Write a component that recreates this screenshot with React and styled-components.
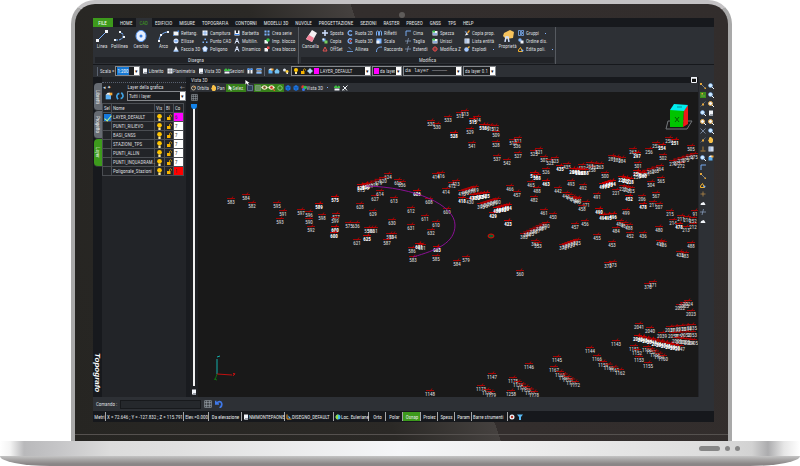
import React from 'react';
import styled, { createGlobalStyle, css } from 'styled-components';

const GlobalStyle = createGlobalStyle`
  * {
    box-sizing: border-box;
  }

  body {
    margin: 0;
    background: #fff;
    overflow: hidden;
  }

  body, button, input, select, table {
    font-family: 'Roboto Condensed', Lato, 'Liberation Sans', sans-serif;
    font-size: 5px;
    line-height: 6px;
    color: #d8dade;
  }

  button, input, select {
    margin: 0;
    padding: 0;
    border: 0;
    border-radius: 0;
    background: none;
    appearance: none;
    outline: none;
  }

  svg {
    display: block;
    flex: none;
  }
`;

/* ---------- Laptop ---------- */
const Page = styled.div`
  display: flex;
  flex-direction: column;
  height: 100vh;
`;

const Lid = styled.div`
  flex: 1;
  min-height: 0;
  display: flex;
  flex-direction: column;
  margin: 0 68px 0 71px;
  border: 4px solid #a9a9a9;
  border-top-color: #c4c2c4;
  border-bottom: 0;
  border-radius: 24px 24px 0 0;
  background: linear-gradient(71deg, #262522 0%, #2b2926 40%, #45413f 53%, #332e2d 53%, #322d2c 100%);
`;

const CameraBar = styled.div`
  display: flex;
  justify-content: center;
  align-items: flex-end;
  height: 14px;
`;

const Camera = styled.div`
  width: 6px;
  height: 6px;
  border-radius: 50%;
  background: #5f5c5a;
`;

const Chin = styled.div`
  height: 19px;
  padding-top: 12px;

  &::before {
    content: '';
    display: block;
    height: 1px;
    background: #55514f;
  }
`;

const Base = styled.div`
  display: flex;
  justify-content: flex-end;
  align-items: center;
  gap: 5px;
  height: 15px;
  padding-right: 60px;
  background: linear-gradient(90deg, #fff 0, #f4f4f4 10px, #b9b9bb 24px, #c6c6c8 60px, #dcdcdc 110px,
    #e0e0e0 22%, #f5f6f8 50%, #ededed 66%, #dedede 88%, #d2d2d2 94%, #acacae 96%, #e6e6e6 98%, #fff 100%);
`;

const Port = styled.div`
  width: ${(p) => p.$w}px;
  height: 5px;
  border-radius: 3px;
  background: #868686;
`;

const Underside = styled.div`
  height: 10px;
  border-radius: 0 0 50px 50px / 0 0 10px 10px;
  background: linear-gradient(#c4c4c4, #a5a3a3 40%, #8a8586 80%);
`;

/* ---------- Application window ---------- */
const Screen = styled.div`
  flex: 1;
  min-height: 0;
  display: flex;
  flex-direction: column;
  margin: 0 14px 0 18px;
  background: #2d3035;
  white-space: nowrap;
`;

const TabBar = styled.nav`
  display: flex;
  height: 9px;
  background: #17191d;
`;

const Tab = styled.button`
  height: 9px;
  padding: 0 4px 0 3px;
  color: ${(p) => (p.$active ? '#3f9a22' : '#e4e6e8')};
  background: ${(p) => (p.$active ? '#2d3035' : 'none')};

  ${(p) => p.$file && css`
    width: 20px;
    margin-right: 4px;
    color: #fff;
    background: #3d9a1c;
  `}
`;

const Ribbon = styled.div`
  display: flex;
  height: 38px;
  border-bottom: 1px solid #16181c;
`;

const Group = styled.section`
  display: flex;
  flex-direction: column;
  width: ${(p) => p.$w}px;
  border-right: 1px solid #565a60;
`;

const GroupBody = styled.div`
  display: grid;
  grid-template-columns: ${(p) => p.$cols};
  height: 30px;
  padding-top: 3px;
`;

const GroupCaption = styled.div`
  height: 6px;
  margin: 0 1px 0 2px;
  text-align: center;
  background: #212327;
`;

const BigButton = styled.button`
  display: flex;
  flex-direction: column;
  align-items: center;
  height: 19px;
  gap: 1px;
`;

const SmallColumn = styled.div`
  display: flex;
  flex-direction: column;
  gap: 2px;
`;

const SmallButton = styled.button`
  display: flex;
  align-items: center;
  gap: 2px;
  height: 6px;
`;

const MenuDot = styled.span`
  width: 1px;
  height: 1px;
  margin: 1px 4px;
  background: #7fb0ff;
`;

const Toolbar = styled.div`
  display: flex;
  align-items: center;
  gap: 1px;
  height: 12px;
  padding-left: 4px;
`;

const ToolButton = styled.button`
  display: flex;
  align-items: center;
  height: ${(p) => p.$h || 9}px;
  padding: 0 1px;
  background: ${(p) => (p.$on ? '#37801a' : 'none')};
`;

const Grip = styled.div`
  width: 1px;
  height: 9px;
  margin-right: 1px;
  background: #5b6370;
`;

const Combo = styled.div`
  display: flex;
  align-items: center;
  gap: 1px;
  width: ${(p) => p.$w};
  height: 10px;
  padding-left: 1px;
  border: 1px solid #85888c;
  background: #1d1f22;

  &::after {
    content: '▾';
    width: 5px;
    height: 8px;
    flex: none;
    line-height: 8px;
    text-align: center;
    color: #111;
    background: #fff;
  }
`;

const ComboSelect = styled.select`
  flex: 1;
  min-width: 0;
  height: 8px;
  font-family: ${(p) => (p.$mono ? "'Liberation Mono', monospace" : 'inherit')};
`;

const ScaleInput = styled.input`
  flex: 1;
  min-width: 0;
  height: 8px;
  color: #fff;
  background: linear-gradient(90deg, #1677d2 12px, #1d1f22 12px);
`;

const Swatch = styled.span`
  flex: none;
  width: 5px;
  height: 6px;
  background: #f0f;
`;

/* ---------- Side panel ---------- */
const Workspace = styled.div`
  flex: 1;
  min-height: 0;
  display: grid;
  grid-template-columns: 9px 88px minmax(0, 1fr) 16px;
`;

const DockTabs = styled.div`
  display: flex;
  flex-direction: column;
  padding-top: 6px;
  background: #17191d;
`;

const DockTab = styled.button`
  height: 28px;
  margin-left: 1px;
  writing-mode: vertical-rl;
  border-radius: 4px 0 0 4px;
  border-bottom: 1px solid #2f3236;
  color: #f0f0f0;
  background: ${(p) => (p.$active ? '#3d9a1c' : '#666b72')};
`;

const Brand = styled.div`
  margin: auto 0 5px;
  writing-mode: vertical-rl;
  font-family: 'Liberation Sans', Arial, sans-serif;
  font-size: 8px;
  font-weight: bold;
  font-style: italic;
  line-height: 9px;
  color: #fff;
`;

const Panel = styled.aside`
  padding-top: 5px;
  border-right: 4px solid #191b1f;
  background: #222428;
`;

const PanelTitle = styled.div`
  display: flex;
  align-items: center;
  justify-content: space-between;
  height: 9px;
  padding: 0 1px;
  border-top: 1px dotted #596170;
`;

const PanelTools = styled.div`
  display: flex;
  align-items: center;
  gap: 3px;
  height: 10px;
  padding-left: 3px;
  margin-bottom: 2px;
`;

const LayerTable = styled.table`
  width: 81px;
  border-collapse: collapse;
  table-layout: fixed;

  th, td {
    height: 9px;
    padding: 0 1px;
    border: 1px solid #4a4d52;
    font-weight: normal;
    line-height: 6px;
    text-align: left;
  }
`;

const ColorCell = styled.td`
  color: #333;
  background: ${(p) => p.$c};
`;

const LayerCheck = styled.input`
  display: block;
  width: 7px;
  height: 7px;

  &:checked {
    background: #1679dc;
  }

  &:checked::after {
    content: '';
    display: block;
    width: 3px;
    height: 6px;
    margin-left: 2px;
    border: solid #bdf58a;
    border-width: 0 1px 1px 0;
    transform: rotate(40deg);
  }
`;

/* ---------- 3D view ---------- */
const View = styled.main`
  display: flex;
  flex-direction: column;
  min-width: 0;
  min-height: 0;
`;

const ViewTitle = styled.div`
  position: relative;
  display: flex;
  justify-content: space-between;
  height: 6px;
  padding: 0 1px;
  background: #17191d;
`;

const Pointer = styled.svg`
  position: absolute;
  left: 55px;
  top: 2px;
`;

const ViewTools = styled.div`
  display: flex;
  align-items: center;
  height: 9px;
`;

const ViewBody = styled.div`
  flex: 1;
  min-height: 0;
  display: flex;
  background: #191919;
`;

const SliderColumn = styled.div`
  display: flex;
  flex-direction: column;
  align-items: center;
  width: 8px;
  padding: 2px 0;
  gap: 3px;
  background: #1d1f22;
`;

const ZoomSlider = styled.input`
  flex: 1;
  min-height: 0;
  width: 6px;
  writing-mode: vertical-lr;

  &::-webkit-slider-runnable-track {
    width: 2px;
    margin: 0 auto;
    background: #f1f1f1;
  }

  &::-webkit-slider-thumb {
    appearance: none;
    width: 6px;
    height: 5px;
    margin-left: -2px;
    border-radius: 0 0 3px 3px;
    background: #1383ea;
  }
`;

const Canvas = styled.svg`
  flex: 1 1 0;
  min-width: 0;
  height: 100%;
`;

const RightTools = styled.div`
  display: grid;
  grid-template-columns: 8px 8px;
  grid-auto-rows: 9px;
  align-content: start;
  justify-items: center;
  align-items: center;
  padding-top: 4px;
  border-left: 1px solid #23252a;
`;

const IconButton = styled.button`
  grid-column: ${(p) => p.$col};
  grid-row: ${(p) => p.$row};
`;

/* ---------- Command and status ---------- */
const CommandBar = styled.div`
  display: flex;
  align-items: center;
  gap: 3px;
  height: 14px;
  padding-left: 3px;
`;

const CommandInput = styled.input`
  width: 81px;
  height: 9px;
  border: 1px solid #17191c;
  background: #25282c;
`;

const StatusBar = styled.footer`
  display: flex;
  align-items: center;
  height: 11px;
  background: #16181c;
`;

const StatusItem = styled.button`
  display: flex;
  align-items: center;
  justify-content: ${(p) => (p.$start ? 'flex-start' : 'center')};
  width: ${(p) => p.$w}px;
  height: 9px;
  padding-left: 1px;
  border-right: 1px solid #a4a6a8;
  color: #e4e6e8;
  background: ${(p) => (p.$on ? '#3d9a1c' : 'none')};
`;

/* ---------- Icons, drawn on a 12 x 12 grid ---------- */
const B = '#7db4ff';
const W = '#f2f5fa';
const G = '#35c24a';

const DRAWINGS = {
  line: <><path d="M2 10 10 2" stroke={B} /><path d="M0 9h3v3H0zM9 0h3v3H9z" fill={W} /></>,
  polyline: <><path d="M1 10h4l4-2V4L5 2" stroke={B} fill="none" strokeDasharray="3 1" /><path d="M0 9h2v2H0zM5 1h2v2H5zM9 6h2v2H9z" fill={W} /></>,
  circle: <><ellipse cx="6" cy="6" rx="5" ry="5.6" fill="#e6efff" stroke="#5b9bf5" /><circle cx="6" cy="6" r="1.5" fill="#3b7fe0" /></>,
  arc: <><path d="M1 11C1 6 5 2 10 2" stroke={B} fill="none" /><path d="M0 10h2v2H0zM2 4h2v2H2zM9 1h2v2H9z" fill={W} /></>,
  rect: <><path d="M1 3h10v8H1z" fill={W} /><path d="M0 10h3v2H0zM9 1h3v3H9z" fill="#3f86ea" /></>,
  ellipse: <><circle cx="6" cy="6" r="5" fill="#dce9ff" /><path d="M3 6h6" stroke="#3f86ea" strokeWidth="2" /></>,
  face: <><path d="M6 0 11 11H1z" fill={W} /><path d="M1 9h10v2H1z" fill={B} /></>,
  hatch: <><path d="M1 1h10v10H1z" fill={W} /><path d="M1 6h10M6 1v10" stroke="#3f86ea" /></>,
  dots: <path d="M5 1h3v3H5zM1 7h3v3H1zM8 7h3v3H8z" fill={B} />,
  polygon: <path d="M6 0 11 4 9 11H3L1 4z" fill="#dce9ff" stroke={B} />,
  beard: <><path d="M1 1h3v5h4V1h3v10H1z" fill={W} /><path d="M1 9h10" stroke="#3f86ea" strokeWidth="2" /></>,
  letter: <path d="M2 11 6 1l4 10M4 7h4" stroke="#dbe8ff" strokeWidth="2" fill="none" />,
  block: <><path d="M1 1h4v4H1zM7 1h4v4H7zM1 7h4v4H1zM7 7h4v4H7z" fill={B} /></>,
  importBlock: <><path d="M1 4h7v7H1z" fill={W} /><circle cx="8" cy="4" r="3.5" fill={G} /></>,
  newBlock: <><path d="M1 4h7v7H1z" fill={W} /><path d="M6 1h5v5H6z" fill="#ef5252" /></>,
  eraser: <><path d="M7 0 12 3 7 12 1 9z" fill="#f6f1f4" /><path d="M4 5l5 3-2 4-6-3z" fill="#f27f96" /></>,
  move: <path d="M6 0v12M0 6h12" stroke="#cfe0ff" strokeWidth="3" />,
  copy: <><path d="M1 1h6v6H1z" fill={B} /><path d="M5 5h6v6H5z" fill="#76d05f" /><path d="M1 1h3v3H1z" fill={W} /></>,
  offset: <path d="M6 2 10 10H2z" fill="none" stroke="#e15353" strokeWidth="2" />,
  rotate: <path d="M10 3A4.500 4.500 0 1 0 10 9" fill="none" stroke={B} strokeWidth="2.500" />,
  rotateRed: <><path d="M10 3A4.500 4.500 0 1 0 10 9" fill="none" stroke={B} strokeWidth="2.500" /><circle cx="7" cy="6" r="2" fill="#e15353" /></>,
  align: <path d="M0 11h12M3 2l5 5" stroke={B} strokeWidth="1.500" />,
  mirror: <path d="M1 11V4q2-4 4-1v8M7 11V3q3-3 4 1v7" fill="none" stroke={B} strokeWidth="1.800" />,
  scale: <><path d="M1 1h10v10H1z" fill={B} /><path d="M1 5h6v6H1z" fill={W} /></>,
  fillet: <path d="M1 12C1 5 4 2 12 2" fill="none" stroke={B} strokeWidth="1.800" />,
  corner: <path d="M2 12V2h10" fill="none" stroke={B} strokeWidth="1.800" />,
  trim: <path d="M0 6h12M7 0 4 12" stroke="#8fa6c8" strokeWidth="1.400" />,
  split: <><path d="M1 2h10v9H1z" fill={W} /><path d="M1 1h5v4H1z" fill={G} /><path d="M2 8h8" stroke="#2c65c0" strokeWidth="2" /></>,
  editZ: <><circle cx="6" cy="6" r="4" fill="none" stroke="#e34a4a" strokeWidth="2" /><path d="M6 0v12M0 6h12" stroke="#e34a4a" /></>,
  brush: <><path d="M2 11 5 5l4 4z" fill={W} /><path d="M6 5l4-5 2 2-4 5z" fill="#f0a030" /><path d="M1 3h4v4z" fill={B} /></>,
  list: <><path d="M1 1h10v10H1z" fill={W} /><path d="M1 4h10M1 8h10M4 1v10" stroke="#5583c4" /></>,
  bomb: <><circle cx="5" cy="7" r="4.500" fill="#a5c9ff" /><path d="M8 4l3-3" stroke="#f4b030" strokeWidth="2.500" /></>,
  hand: <><path d="M2 3 8 0l4 2-1 6-7 1-3-3z" fill="#f6c35c" /><path d="M3 12l1-5 2 0 1 5" fill="none" stroke="#cfe0ff" strokeWidth="1.500" /></>,
  group: <><path d="M1 1h4v10H1zM7 1h4v4H7zM7 7h4v4H7z" fill="none" stroke={B} strokeWidth="1.500" /></>,
  order: <><circle cx="4" cy="4" r="3.500" fill={B} /><path d="M5 5h6v6H5z" fill={W} /></>,
  editPoly: <><path d="M1 11V8l4-5 4 8z" fill="none" stroke="#f3b12b" strokeWidth="2" /><circle cx="9" cy="9" r="2" fill={B} /></>,
  page: <><path d="M2 1h8v10H2z" fill={W} /><path d="M4 8h6v4H4z" fill="#9a9fa8" /></>,
  plan: <><path d="M1 1h10v10H1z" fill={W} /><path d="M1 6h10M6 1v10" stroke="#4a5059" /></>,
  maximize: <><path d="M1 1h10v10H1z" fill="#111" stroke={W} strokeWidth="2" /><path d="M0 2h12" stroke={W} strokeWidth="3" /></>,
  section: <><path d="M0 4 3 1h2l2 3 2-3 3 2v3H0z" fill="#3fbf42" /><path d="M1 7h10v4H1z" fill={W} /></>,
  columns: <><path d="M1 1h4v10H1zM7 1h4v10H7z" fill={W} /><path d="M1 1h4v3H1zM7 1h4v3H7z" fill="#2f83f0" /></>,
  rows: <><path d="M1 1h10v4H1zM1 7h10v4H1z" fill={W} /><path d="M1 3h10M1 10h10" stroke="#2f83f0" strokeWidth="2" /></>,
  folder: <><path d="M1 4h8v7H1z" fill="#5cb0f4" /><path d="M6 1h5v4H6z" fill="#f6a938" /><path d="M1 4l3-3h3v3z" fill={W} /></>,
  house: <path d="M1 6 6 1l5 5-1 5H2z" fill="#78c4f2" />,
  bulb: <><circle cx="6" cy="4" r="4" fill="#ffc400" /><path d="M4 8h4v4H4z" fill="#f7e7a4" /></>,
  bulbs: <><circle cx="3" cy="4" r="3" fill="#dfe5ee" /><circle cx="8" cy="7" r="3" fill="#ffcf33" /><path d="M7 9h3v3H7z" fill={W} /></>,
  lock: <><path d="M2 6h7v6H2z" fill="#f6b400" /><path d="M7 6V3q2-3 4 0v2" fill="none" stroke="#f6b400" strokeWidth="1.500" /></>,
  sun: <><circle cx="6" cy="6" r="4" fill="#e2f3ff" /><path d="M6 0v12M0 6h12" stroke="#9fd2f4" strokeWidth="2" /></>,
  refresh: <path d="M3 11C0 7 1 3 5 2M8 1c4 4 3 8-1 9" fill="none" stroke="#41a5e6" strokeWidth="2.500" />,
  orbit: <><circle cx="5" cy="6" r="4" fill="none" stroke="#e9d9b4" strokeWidth="1.500" /><path d="M5 6l4-4" stroke="#e88a30" strokeWidth="2" /></>,
  pan: <path d="M3 12 0 6l2-1V1h2V0h2v1h2v2h2v6l-2 3z" fill="#f8c048" />,
  arrow: <path d="M3 0v10l3-2 2 4 1-1-1-4h3z" fill={W} />,
  monitor: <><path d="M1 1h10v10H1z" fill="#2d3e57" stroke="#8ba6c9" /></>,
  grid: <path d="M1 1h10v10H1zM1 4h10M1 8h10M4 1v10M8 1v10" fill="none" stroke="#a2aab2" />,
  eye: <><path d="M0 6q6-8 12 0q-6 8-12 0" fill="#f5ead0" /><circle cx="6" cy="6" r="2.200" fill="#70531c" /></>,
  eyeRed: <><path d="M0 6q6-8 12 0q-6 8-12 0" fill="#f5ead0" /><circle cx="6" cy="6" r="2.200" fill="#ca2a1a" /><path d="M8 8l4 4" stroke="#e55b30" strokeWidth="2" /></>,
  orb: <circle cx="6" cy="6" r="4.500" fill="none" stroke="#8bc97c" strokeWidth="2" />,
  cube: <><path d="M1 3 6 0l5 3v6l-5 3-5-3z" fill="#1d76e0" /><path d="M6 6v6M1 3l5 3 5-3" stroke="#0b3f8e" fill="none" /></>,
  rgb: <><circle cx="4" cy="4" r="3.500" fill="#e73535" /><circle cx="8" cy="5" r="3.500" fill="#30c241" /><circle cx="5" cy="9" r="3" fill="#3677f0" /></>,
  plane: <path d="M1 11 11 1M6 6 2 2M6 6l4 5M1 8l3 3" stroke={W} strokeWidth="2" />,
  undo: <path d="M2 5Q8 0 10 5q1 4-3 7M1 1v5h5" fill="none" stroke="#3f78e8" strokeWidth="2.500" />,
  globe: <><circle cx="6" cy="6" r="5" fill="#39b7f2" /><path d="M6 1c3 2-3 4 1 6l-2 4C-1 9 1 1 6 1" fill="#9bdb3c" /></>,
  axes: <><path d="M2 1v9h9" fill="none" stroke="#f0a02a" strokeWidth="2" /><path d="M4 3l5 4-3 3z" fill="#4ea9f4" /></>,
  target: <><circle cx="6" cy="6" r="5" fill={W} /><circle cx="6" cy="6" r="2.500" fill="#b63a2c" /></>,
  funnel: <path d="M0 1h12L8 6v6H4V6z" fill="#58b9f3" />,
  lens: <><circle cx="5" cy="5" r="4" fill="#cfeaff" stroke={B} /><path d="M8 8l4 4" stroke={W} strokeWidth="2" /></>,
  lensGold: <><circle cx="5" cy="5" r="4" fill={W} stroke="#e5a94a" strokeWidth="2" /><path d="M8 8l4 4" stroke={W} strokeWidth="2" /></>,
  node: <><path d="M2 2l8 8" stroke="#c9ced6" /><path d="M0 0h4v4H0zM9 9h3v3H9z" fill="#e2a43b" /></>,
  snapOn: <><path d="M0 0h12v12H0z" fill="#3d8c1c" /><path d="M3 2h3v3H3z" fill="#e6a83e" /><path d="M2 8h8" stroke="#8bc97c" /></>,
  snap: <><path d="M1 11 11 1" stroke="#8b99ad" /><path d="M4 5h4v4H4z" fill="#e6a83e" /></>,
  cross: <path d="M1 1l10 10M11 1 1 11" stroke="#8e9fbb" strokeWidth="1.500" />,
  perp: <path d="M6 1v8M1 10h10" stroke="#c08b3a" strokeWidth="1.800" />,
  plus: <path d="M6 1v10M1 6h10" stroke="#b98b4a" strokeWidth="1.500" />,
  cloud: <><path d="M1 10q0-5 4-5 3-4 6 5z" fill={W} /></>,
};

function Icon({ name, size = 6 }) {
  return (
    <svg width={size} height={size} viewBox="0 0 12 12" fill="none" aria-hidden="true">
      {DRAWINGS[name]}
    </svg>
  );
}

const TABS = ['HOME', 'CAD', 'EDIFICIO', 'MISURE', 'TOPOGRAFIA', 'CONTORNI', 'MODELLI 3D', 'NUVOLE',
  'PROGETTAZIONE', 'SEZIONI', 'RASTER', 'PREGEO', 'GNSS', 'TPS', 'HELP'];

const DRAW_BIG = [['line', 'Linea'], ['polyline', 'Polilinea'], ['circle', 'Cerchio', true], ['arc', 'Arco', true]];

const DRAW_COLUMNS = [
  [['rect', 'Rettang.'], ['ellipse', 'Ellisse'], ['face', 'Faccia 3D']],
  [['hatch', 'Campitura'], ['dots', 'Punto CAD'], ['polygon', 'Poligono']],
  [['beard', 'Barbetta'], ['letter', 'Multilin.'], ['letter', 'Dinamico']],
  [['block', 'Crea serie'], ['importBlock', 'Imp. blocco'], ['newBlock', 'Crea blocco']],
];

const EDIT_COLUMNS = [
  [['move', 'Sposta'], ['copy', 'Copia'], ['offset', 'OffSet']],
  [['rotate', 'Ruota 2D'], ['rotateRed', 'Ruota 3D'], ['align', 'Allinea']],
  [['mirror', 'Rifletti'], ['scale', 'Scala'], ['fillet', 'Raccorda']],
  [['corner', 'Cima'], ['trim', 'Taglia'], ['trim', 'Estendi']],
  [['split', 'Spezza'], ['split', 'Unisci'], ['editZ', 'Modifica Z']],
  [['brush', 'Copia prop.'], ['list', 'Lista entità'], ['bomb', 'Esplodi', true]],
];

const LAST_COLUMN = [['group', 'Gruppi', true], ['order', 'Ordine dis.', true], ['editPoly', 'Edita poli.', true]];

const LAYERS = [
  ['LAYER_DEFAULT', 6, '#f0f'],
  ['PUNTI_RILIEVO', 7, '#fff'],
  ['BASI_GNSS', 7, '#fff'],
  ['STAZIONI_TPS', 7, '#fff'],
  ['PUNTI_ALLIN', 7, '#fff'],
  ['PUNTI_INQUADRAM..', 7, '#fff'],
  ['Poligonale_Stazioni', 1, '#f00'],
];

const LEFT_SNAPS = ['node', 'snapOn', 'snap', 'lens', 'lensGold', 'cross', 'snap', 'perp', 'lens', 'corner',
  'node', 'editPoly', 'plus', 'cloud', 'trim', 'cloud'];
const RIGHT_SNAPS = ['lens', 'lens', 'lensGold', 'page', 'lensGold', 'lens', 'pan', 'list', 'folder'];

// survey points: x, y, number
const POINTS = [
  [231, 202, 583], [246, 198, 584], [252, 206, 582], [277, 206, 595], [283, 214, 591], [280, 222, 593],
  [301, 213, 597], [309, 215, 596], [311, 230, 592], [309, 222, 590], [322, 218, 598], [336, 217, 577],
  [335, 221, 599], [349, 226, 575], [356, 226, 636], [357, 243, 621], [360, 207, 628], [373, 214, 629],
  [375, 199, 627], [380, 194, 614], [394, 201, 613], [411, 211, 612], [392, 223, 630], [411, 228, 631],
  [425, 219, 611], [436, 225, 610], [431, 233, 632], [447, 212, 609], [429, 202, 608], [388, 177, 624],
  [398, 183, 605], [402, 185, 636], [436, 177, 414], [441, 176, 416], [452, 186, 412], [456, 184, 413],
  [446, 192, 414], [470, 202, 430], [510, 189, 466], [517, 195, 457], [390, 237, 593], [393, 237, 594],
  [387, 243, 587], [412, 251, 586], [422, 248, 601], [413, 260, 583], [436, 259, 585], [457, 264, 584],
  [466, 260, 579], [520, 274, 560], [431, 124, 538], [437, 127, 530], [448, 120, 533], [460, 116, 512],
  [465, 114, 513], [477, 120, 514], [470, 132, 529], [496, 135, 509], [472, 146, 541], [496, 145, 528],
  [497, 159, 537], [507, 163, 542], [518, 156, 527], [513, 143, 510], [518, 141, 511], [517, 146, 536],
  [534, 154, 525], [539, 152, 521], [544, 160, 507], [567, 167, 435], [546, 172, 526], [582, 168, 492],
  [592, 170, 258], [531, 185, 465], [537, 191, 488], [571, 184, 493], [583, 188, 492], [558, 191, 442],
  [578, 201, 441], [586, 205, 471], [582, 209, 458], [534, 200, 482], [544, 213, 461], [553, 217, 450],
  [597, 197, 491], [605, 176, 500], [612, 159, 281], [633, 152, 263], [649, 152, 256], [656, 146, 252],
  [669, 141, 250], [691, 149, 505], [663, 158, 502], [638, 166, 501], [681, 166, 272], [651, 185, 504],
  [661, 181, 565], [616, 193, 221], [642, 199, 206], [656, 196, 567], [653, 205, 211], [659, 207, 207],
  [626, 213, 499], [616, 231, 484], [597, 238, 455], [630, 236, 452], [643, 236, 436], [659, 230, 480],
  [612, 245, 453], [575, 227, 457], [585, 224, 456], [535, 244, 383], [538, 246, 353], [660, 244, 419],
  [663, 245, 426], [691, 246, 488], [680, 255, 435], [685, 256, 483], [670, 214, 215], [681, 219, 211],
  [687, 220, 216], [693, 221, 252], [673, 223, 214], [686, 230, 213], [693, 227, 212], [695, 214, 91],
  [608, 266, 372], [613, 265, 373], [648, 287, 370], [653, 285, 371], [691, 314, 2023], [639, 327, 2041],
  [650, 331, 2040], [662, 336, 2039], [680, 349, 2047], [634, 349, 1151], [637, 353, 1152],
  [639, 360, 1153], [648, 366, 1155], [616, 344, 1143], [590, 351, 1144], [597, 359, 1166],
  [557, 360, 1145], [554, 370, 1167], [529, 367, 1146], [492, 377, 1147], [513, 381, 1175],
  [481, 389, 1173], [430, 394, 1148], [511, 394, 1258],
];

// points measured on top of each other
const DENSE_POINTS = [
  [319, 207, 589], [335, 200, 575], [335, 230, 600], [334, 236, 600], [367, 239, 625], [417, 194, 606],
  [462, 201, 418], [493, 216, 429], [508, 224, 423], [419, 247, 601], [437, 250, 603], [473, 122, 515],
  [454, 136, 528], [483, 128, 516], [560, 169, 435], [534, 176, 513], [537, 178, 508], [546, 184, 463],
  [637, 156, 297], [662, 148, 254], [675, 143, 251], [629, 199, 452], [643, 207, 478], [599, 212, 490],
  [679, 227, 478],
];

// lines of close points: x1, y1, x2, y2, how many, first number, dense
const RUNS = [
  [361, 190, 383, 181, 6, 615], [361, 188, 366, 187, 2, 625, true], [368, 231, 374, 231, 3, 559],
  [462, 194, 475, 190, 5, 415], [473, 198, 486, 196, 5, 431, true], [481, 207, 497, 202, 6, 395],
  [497, 211, 508, 208, 5, 400, true], [486, 128, 495, 129, 3, 510], [550, 163, 555, 161, 2, 522],
  [573, 172, 585, 173, 5, 264, true], [590, 166, 600, 167, 3, 261], [566, 196, 577, 202, 4, 443],
  [603, 187, 612, 184, 4, 491, true], [617, 160, 622, 161, 2, 283], [673, 164, 694, 157, 6, 270],
  [637, 177, 660, 169, 6, 259], [637, 174, 643, 176, 2, 259, true], [622, 180, 630, 182, 3, 226, true],
  [623, 189, 631, 191, 3, 223], [603, 218, 613, 217, 3, 494, true], [620, 224, 629, 228, 3, 486],
  [524, 237, 546, 226, 8, 383], [563, 248, 577, 243, 6, 370], [680, 308, 688, 304, 3, 2022],
  [638, 339, 675, 348, 9, 2042, true], [670, 330, 692, 328, 5, 2031], [673, 336, 692, 335, 4, 2050],
  [677, 341, 693, 343, 5, 2001], [647, 350, 663, 359, 5, 1156], [603, 365, 620, 373, 4, 1159],
  [560, 375, 575, 385, 5, 1168], [518, 385, 534, 395, 5, 1174], [487, 393, 491, 395, 2, 1178],
];

function spread([x1, y1, x2, y2, count, first, dense]) {
  return Array.from({ length: count }, (_, i) => {
    const t = i / (count - 1);
    return [x1 + (x2 - x1) * t, y1 + (y2 - y1) * t, first + i, dense];
  });
}

const ALL_POINTS = [...POINTS, ...DENSE_POINTS.map((p) => [...p, true]), ...RUNS.flatMap(spread)];

function SurveyPoint({ x, y, number, dense }) {
  return (
    <g>
      <text x={x} y={y + 2} fontWeight={dense ? 'bold' : 'normal'} fill={dense ? '#fff' : '#e2e2e2'}>{number}</text>
      <path d={`M${x - 4} ${y - 3.5}h8M${x} ${y - 2.500}l2-3`} stroke="#c00000" strokeWidth={dense ? 1.2 : 0.8} />
    </g>
  );
}

function SurveyCanvas() {
  return (
    <Canvas viewBox="198 92 500 305" preserveAspectRatio="xMidYMid slice" fontSize="5" textAnchor="middle">
      {ALL_POINTS.map(([x, y, number, dense], i) => (
        <SurveyPoint key={i} x={x} y={y} number={number} dense={dense} />
      ))}
      <path d="M366 186C415 187 455 205 455 225C455 243 437 250 413 257" fill="none" stroke="#8a1094" />
      <ellipse cx="491" cy="236" rx="3" ry="2" fill="#063" stroke="#e00" />

      {/* view cube */}
      <path d="M668 121h24l-5 8h-21z" fill="none" stroke="#75787c" />
      <path d="M670 110h14l-1 17h-13z" fill="#00c400" />
      <path d="M684 110l4-5v19l-5 3z" fill="#f01818" />
      <path d="M670 110l4-6 14 1-4 6z" fill="#00eef0" />
      <path d="M675 117l4 5M679 117l-4 5" stroke="#075c07" />
      <path d="M677 107h5" stroke="#0a8c90" />

      {/* axes */}
      <path d="M217 374v-15M217 357l3-1" stroke="#14b0ac" fill="none" />
      <path d="M217 374l15 1M233 373l2 2m0-2l-2 3" stroke="#c01010" />
      <path d="M217 374l-2 6M214 379l3 1" stroke="#116b11" />
    </Canvas>
  );
}

function ButtonColumn({ items }) {
  return (
    <SmallColumn>
      {items.map(([icon, label, menu]) => (
        <SmallButton key={label}>
          <Icon name={icon} />
          {label}
          {menu && <MenuDot />}
        </SmallButton>
      ))}
    </SmallColumn>
  );
}

function Big({ icon, label, menu }) {
  return (
    <BigButton>
      <Icon name={icon} size={12} />
      {label}
      {menu && <MenuDot />}
    </BigButton>
  );
}

function LayerPanel() {
  return (
    <Panel>
      <PanelTitle>
        <span>◂ ✦</span>
        <span>Layer della grafica</span>
        <span>←</span>
      </PanelTitle>
      <PanelTools>
        <Icon name="folder" size={8} />
        <Icon name="refresh" size={8} />
        <Combo $w="60px">
          <ComboSelect aria-label="Filtro layer"><option>Tutti i layer</option></ComboSelect>
        </Combo>
      </PanelTools>
      <LayerTable>
        <colgroup>
          <col width="9" /><col width="43" /><col width="10" /><col width="9" /><col width="10" />
        </colgroup>
        <thead>
          <tr><th>Sel</th><th>Nome</th><th>Vis</th><th>Bl</th><th>Co</th></tr>
        </thead>
        <tbody>
          {LAYERS.map(([name, number, color], i) => (
            <tr key={name}>
              <td><LayerCheck type="checkbox" aria-label={name} defaultChecked={i === 0} /></td>
              <td>{name}</td>
              <td><Icon name="bulb" size={7} /></td>
              <td><Icon name="lock" /></td>
              <ColorCell $c={color}>{number}</ColorCell>
            </tr>
          ))}
        </tbody>
      </LayerTable>
    </Panel>
  );
}

function View3D() {
  return (
    <View>
      <ViewTitle>
        <span>Vista 3D</span>
        <Icon name="maximize" size={6} />
        <Pointer width="5" height="7" viewBox="0 0 12 12"><path d="M1 0v11l3-3 3 4 2-1-2-4h4z" fill="#fff" /></Pointer>
      </ViewTitle>
      <ViewTools>
        <ToolButton><Icon name="orbit" />Orbita</ToolButton>
        <ToolButton><Icon name="pan" />Pan</ToolButton>
        <ToolButton $on $h={8}><Icon name="arrow" />Selez.</ToolButton>
        <ToolButton $h={8}><Icon name="monitor" /></ToolButton>
        <ToolButton $on $h={8}><Icon name="grid" /><Icon name="eye" size={7} /><Icon name="eyeRed" size={7} /></ToolButton>
        <ToolButton $on $h={8}><Icon name="orb" /></ToolButton>
        <ToolButton><Icon name="cube" size={6} /></ToolButton>
        <ToolButton><Icon name="cube" size={6} /></ToolButton>
        <ToolButton><Icon name="rgb" />Vista 3D<MenuDot /></ToolButton>
        <ToolButton><Icon name="section" /></ToolButton>
        <ToolButton><Icon name="plane" /></ToolButton>
      </ViewTools>
      <ViewBody>
        <SliderColumn>
          <Icon name="grid" size={7} />
          <ZoomSlider type="range" aria-label="Zoom" defaultValue={0} />
          <Icon name="page" size={6} />
        </SliderColumn>
        <SurveyCanvas />
      </ViewBody>
    </View>
  );
}

function App() {
  return (
    <Page>
      <GlobalStyle />
      <Lid>
        <CameraBar><Camera /></CameraBar>
        <Screen>
          <TabBar>
            <Tab $file>FILE</Tab>
            {TABS.map((t) => <Tab key={t} $active={t === 'CAD'}>{t}</Tab>)}
          </TabBar>

          <Ribbon>
            <Group $w={206}>
              <GroupBody $cols="18px 17px 26px 19px 29px 32px 30px 34px">
                {DRAW_BIG.map(([icon, label, menu]) => <Big key={label} icon={icon} label={label} menu={menu} />)}
                {DRAW_COLUMNS.map((items, i) => <ButtonColumn key={i} items={items} />)}
              </GroupBody>
              <GroupCaption>Disegna</GroupCaption>
            </Group>
            <Group $w={257}>
              <GroupBody $cols="23px 25px 29px 29px 27px 32px 33px 21px 38px">
                <Big icon="eraser" label="Cancella" />
                {EDIT_COLUMNS.map((items, i) => <ButtonColumn key={i} items={items} />)}
                <Big icon="hand" label="Proprietà" />
                <ButtonColumn items={LAST_COLUMN} />
              </GroupBody>
              <GroupCaption>Modifica</GroupCaption>
            </Group>
          </Ribbon>

          <Toolbar>
            <Grip />
            <label htmlFor="scala">Scala =</label>
            <Combo $w="25px"><ScaleInput id="scala" defaultValue="1:200" /></Combo>
            <ToolButton><Icon name="page" />Libretto</ToolButton>
            <ToolButton><Icon name="plan" />Planimetria</ToolButton>
            <ToolButton><Icon name="page" />Vista 3D</ToolButton>
            <ToolButton><Icon name="section" />Sezioni</ToolButton>
            <ToolButton><Icon name="columns" /></ToolButton>
            <ToolButton><Icon name="rows" /></ToolButton>
            <Grip />
            <ToolButton><Icon name="folder" /><Icon name="house" /></ToolButton>
            <ToolButton><Icon name="bulbs" /></ToolButton>
            <Combo $w="80px">
              <Icon name="bulb" /><Icon name="lock" /><Icon name="sun" /><Swatch />
              <ComboSelect aria-label="Layer corrente"><option>LAYER_DEFAULT</option></ComboSelect>
            </Combo>
            <Combo $w="30px">
              <Swatch />
              <ComboSelect aria-label="Colore"><option>da layer</option></ComboSelect>
            </Combo>
            <Combo $w="59px">
              <ComboSelect $mono aria-label="Tipo linea"><option>da layer ─────</option></ComboSelect>
            </Combo>
            <Combo $w="33px">
              <ComboSelect aria-label="Spessore"><option>da layer 0.1</option></ComboSelect>
            </Combo>
          </Toolbar>

          <Workspace>
            <DockTabs>
              <DockTab>Libretti</DockTab>
              <DockTab>Progetto</DockTab>
              <DockTab $active>Layer</DockTab>
              <Brand>Topografo</Brand>
            </DockTabs>
            <LayerPanel />
            <View3D />
            <RightTools>
              {LEFT_SNAPS.map((name, i) => (
                <IconButton key={i} $col={1} $row={i + 1} aria-label={`Snap ${i + 1}`}><Icon name={name} /></IconButton>
              ))}
              {RIGHT_SNAPS.map((name, i) => (
                <IconButton key={i} $col={2} $row={i + 1} aria-label={`Zoom ${i + 1}`}><Icon name={name} /></IconButton>
              ))}
            </RightTools>
          </Workspace>

          <CommandBar>
            <label htmlFor="comando">Comando :</label>
            <CommandInput id="comando" />
            <Icon name="grid" size={8} />
            <Icon name="undo" size={8} />
          </CommandBar>

          <StatusBar>
            <StatusItem $w={13}>Metri</StatusItem>
            <StatusItem $w={78} $start>X = 72.646 ; Y = -127.832 ; Z = 115.791</StatusItem>
            <StatusItem $w={25}>Elev.=0.000</StatusItem>
            <StatusItem $w={33}>Da elevazione</StatusItem>
            <StatusItem $w={43} $start><Icon name="page" />NMMONTEPAONE</StatusItem>
            <StatusItem $w={49} $start><Icon name="axes" />DISEGNO_DEFAULT</StatusItem>
            <StatusItem $w={35} $start><Icon name="globe" />Loc. Euleriane</StatusItem>
            <StatusItem $w={17}>Orto</StatusItem>
            <StatusItem $w={17}>Polar</StatusItem>
            <StatusItem $w={18} $on>Osnap</StatusItem>
            <StatusItem $w={17}>Proiez</StatusItem>
            <StatusItem $w={17}>Spess</StatusItem>
            <StatusItem $w={17}>Param</StatusItem>
            <StatusItem $w={36} $start>Barre strumenti</StatusItem>
            <ToolButton><Icon name="target" /></ToolButton>
            <ToolButton><Icon name="funnel" /></ToolButton>
          </StatusBar>
        </Screen>
        <Chin />
      </Lid>
      <Base>
        <Port $w={21} />
        <Port $w={5} />
        <Port $w={5} />
      </Base>
      <Underside />
    </Page>
  );
}

export default App;
